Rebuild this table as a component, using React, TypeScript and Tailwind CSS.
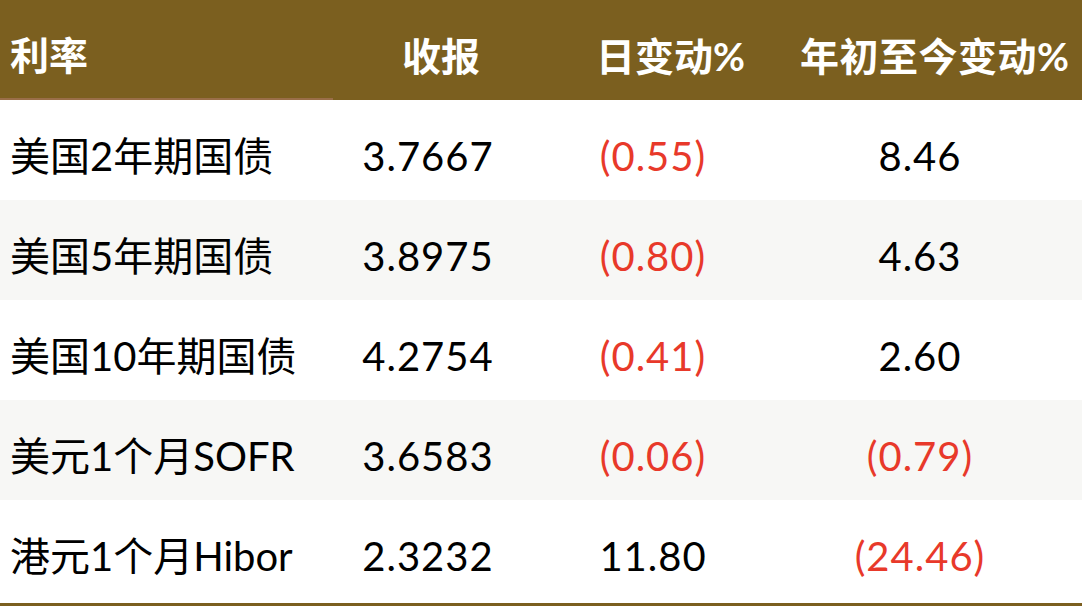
const rows = [
  { name: '美国2年期国债', close: '3.7667', day: '(0.55)', ytd: '8.46' },
  { name: '美国5年期国债', close: '3.8975', day: '(0.80)', ytd: '4.63' },
  { name: '美国10年期国债', close: '4.2754', day: '(0.41)', ytd: '2.60' },
  { name: '美元1个月SOFR', close: '3.6583', day: '(0.06)', ytd: '(0.79)' },
  { name: '港元1个月Hibor', close: '2.3232', day: '11.80', ytd: '(24.46)' },
];

const isNeg = (v: string) => v.startsWith('(');

export default function App() {
  return (
    <div
      className="w-[1082px] h-[610px] bg-white overflow-hidden"
      style={{ fontFamily: '"Lato", "Noto Sans CJK SC", sans-serif' }}
    >
      <div className="flex h-[100px] bg-[#7b5f1f] text-white font-bold text-[39px] leading-none">
        <div className="w-[333px] flex items-center pl-[10px] pt-[12px] border-b-2 border-[#9a6e48]">利率</div>
        <div className="w-[190px] flex items-center pl-[69px] pt-[12px] whitespace-nowrap">收报</div>
        <div className="w-[260px] flex items-center pl-[73px] pt-[12px] whitespace-nowrap">日变动%</div>
        <div className="flex-1 flex items-center pl-[17px] pt-[12px] whitespace-nowrap tracking-[0.5px]">年初至今变动%</div>
      </div>

      {rows.map((r, i) => (
        <div
          key={r.name}
          className={`flex h-[100px] text-[40px] leading-none text-black font-normal ${i % 2 === 1 ? 'bg-[#f7f7f5]' : 'bg-white'}`}
        >
          <div className="w-[333px] flex items-center pl-[10px] pt-[12px] whitespace-nowrap">{r.name}</div>
          <div className="w-[190px] flex items-center justify-center pt-[12px] tracking-[1px]">{r.close}</div>
          <div className={`w-[260px] flex items-center justify-center pt-[12px] tracking-[1px] ${isNeg(r.day) ? 'text-[#e8392a]' : ''}`}>
            {r.day}
          </div>
          <div className={`w-[274px] flex items-center justify-center pt-[12px] tracking-[1px] ${isNeg(r.ytd) ? 'text-[#e8392a]' : ''}`}>
            {r.ytd}
          </div>
        </div>
      ))}

      <div className="mt-[3px] h-[3px] bg-[#7b5f1f]" />
    </div>
  );
}
